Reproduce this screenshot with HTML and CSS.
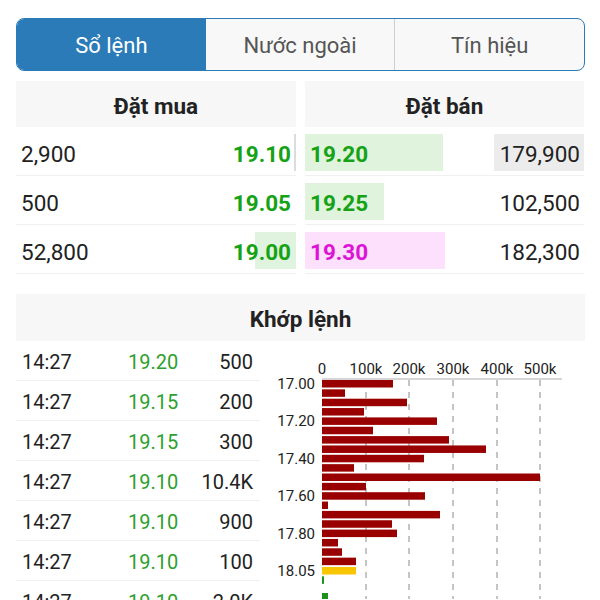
FILE: index.html
```html
<!DOCTYPE html>
<html lang="vi">
<head>
    <meta charset="UTF-8">
    <meta name="viewport" content="width=device-width, initial-scale=1.0">
    <title>Sổ lệnh</title>
    <link rel="stylesheet" href="styles.css">
</head>
<body>
    <div class="page">
        <div class="tabs">
            <div class="tab active">Sổ lệnh</div>
            <div class="tab">Nước ngoài</div>
            <div class="tab">Tín hiệu</div>
        </div>

        <div class="book">
            <div class="side">
                <div class="head">Đặt mua</div>
                <div class="row">
                    <span class="bar bar-bid bar-tiny" style="width:2px"></span>
                    <span class="vol">2,900</span>
                    <span class="px up">19.10</span>
                </div>
                <div class="row">
                    <span class="vol">500</span>
                    <span class="px up">19.05</span>
                </div>
                <div class="row">
                    <span class="bar bar-bid" style="width:41px"></span>
                    <span class="vol">52,800</span>
                    <span class="px up">19.00</span>
                </div>
            </div>
            <div class="side side-ask">
                <div class="head">Đặt bán</div>
                <div class="row">
                    <span class="bar bar-ask" style="width:138px"></span>
                    <span class="bar bar-vol" style="width:90px"></span>
                    <span class="px up">19.20</span>
                    <span class="vol">179,900</span>
                </div>
                <div class="row">
                    <span class="bar bar-ask" style="width:79px"></span>
                    <span class="px up">19.25</span>
                    <span class="vol">102,500</span>
                </div>
                <div class="row">
                    <span class="bar bar-ask ceil" style="width:140px"></span>
                    <span class="px ceil">19.30</span>
                    <span class="vol">182,300</span>
                </div>
            </div>
        </div>

        <div class="match">
            <div class="head">Khớp lệnh</div>
            <div class="match-body">
                <div class="trades">
                    <div class="trade"><span>14:27</span><span class="t-px">19.20</span><span class="t-vol">500</span></div>
                    <div class="trade"><span>14:27</span><span class="t-px">19.15</span><span class="t-vol">200</span></div>
                    <div class="trade"><span>14:27</span><span class="t-px">19.15</span><span class="t-vol">300</span></div>
                    <div class="trade"><span>14:27</span><span class="t-px">19.10</span><span class="t-vol">10.4K</span></div>
                    <div class="trade"><span>14:27</span><span class="t-px">19.10</span><span class="t-vol">900</span></div>
                    <div class="trade"><span>14:27</span><span class="t-px">19.10</span><span class="t-vol">100</span></div>
                    <div class="trade"><span>14:27</span><span class="t-px">19.10</span><span class="t-vol">2.0K</span></div>
                </div>

                <svg class="chart" width="325" height="258" viewBox="260 342 325 258">
                    <!-- truc ngang -->
                    <g class="x-label">
                        <text x="322" y="375">0</text>
                        <text x="366" y="375">100k</text>
                        <text x="409" y="375">200k</text>
                        <text x="453" y="375">300k</text>
                        <text x="497" y="375">400k</text>
                        <text x="540" y="375">500k</text>
                    </g>
                    <line class="axis" x1="322" y1="380" x2="562" y2="380"/>
                    <g class="grid">
                        <line x1="366" y1="381" x2="366" y2="600"/>
                        <line x1="409" y1="381" x2="409" y2="600"/>
                        <line x1="453" y1="381" x2="453" y2="600"/>
                        <line x1="497" y1="381" x2="497" y2="600"/>
                        <line x1="540" y1="381" x2="540" y2="600"/>
                    </g>

                    <!-- khoi luong theo gia -->
                    <g class="bars">
                        <rect x="322" y="381" width="71" height="7.5"/>
                        <rect x="322" y="390.35" width="23" height="7.5"/>
                        <rect x="322" y="399.7" width="85" height="7.5"/>
                        <rect x="322" y="409.05" width="42" height="7.5"/>
                        <rect x="322" y="418.4" width="115" height="7.5"/>
                        <rect x="322" y="427.75" width="51" height="7.5"/>
                        <rect x="322" y="437.1" width="127" height="7.5"/>
                        <rect x="322" y="446.45" width="164" height="7.5"/>
                        <rect x="322" y="455.8" width="102" height="7.5"/>
                        <rect x="322" y="465.15" width="32" height="7.5"/>
                        <rect x="322" y="474.5" width="218" height="7.5"/>
                        <rect x="322" y="483.85" width="44" height="7.5"/>
                        <rect x="322" y="493.2" width="103" height="7.5"/>
                        <rect x="322" y="502.55" width="6" height="7.5"/>
                        <rect x="322" y="511.9" width="118" height="7.5"/>
                        <rect x="322" y="521.25" width="70" height="7.5"/>
                        <rect x="322" y="530.6" width="75" height="7.5"/>
                        <rect x="322" y="539.95" width="16" height="7.5"/>
                        <rect x="322" y="549.3" width="20" height="7.5"/>
                        <rect x="322" y="558.65" width="34" height="7.5"/>
                    </g>
                    <rect class="bar-ref" x="322" y="568" width="34" height="7.5"/>
                    <rect class="bar-up" x="322" y="577.35" width="2" height="7.5"/>
                    <rect class="bar-up" x="322" y="594" width="6" height="7.5"/>

                    <g class="y-label">
                        <text x="315" y="390">17.00</text>
                        <text x="315" y="427.4">17.20</text>
                        <text x="315" y="464.8">17.40</text>
                        <text x="315" y="502.2">17.60</text>
                        <text x="315" y="539.6">17.80</text>
                        <text x="315" y="577">18.05</text>
                    </g>
                </svg>
            </div>
        </div>
    </div>
</body>
</html>
```

FILE: styles.css
```css
*{
    padding: 0;
    margin: 0;
    box-sizing: border-box;
}
body{
    background-color: #fff;
    font-family: Roboto, "Liberation Sans", sans-serif;
    color: #222;
}
.page{
    padding: 18px 15px 0 16px;
}

/* tab */
.tabs{
    display: flex;
    height: 53px;
    border: 1.5px solid #2b7bb9;
    border-radius: 8px;
    overflow: hidden;
    background-color: #f8f8f8;
}
.tab{
    flex: 1;
    display: flex;
    align-items: center;
    justify-content: center;
    padding-top: 2px;
    font-size: 22px;
    color: #555;
    border-left: 1px solid #cfcfcf;
}
.tab:first-child,
.tab.active + .tab{
    border-left: none;
}
.tab.active{
    background-color: #2b7bb9;
    color: #fff;
}

/* so lenh */
.book{
    display: grid;
    grid-template-columns: 280px 279px;
    column-gap: 9px;
    margin-top: 10px;
}
.head{
    height: 46px;
    background-color: #f7f7f7;
    display: flex;
    align-items: center;
    justify-content: center;
    padding-top: 3px;
    font-size: 22.5px;
    font-weight: bold;
    color: #222;
}
.row{
    position: relative;
    height: 49px;
    border-bottom: 1px solid #f0f0f0;
    display: flex;
    align-items: center;
    justify-content: space-between;
    padding: 5px 5px 0;
    font-size: 22.5px;
}
.side-ask .row{
    padding-right: 4px;
}
.row span{
    position: relative;
}
.row .bar{
    position: absolute;
    top: 7px;
    height: 37px;
}
.bar-bid{
    right: 0;
    background-color: #e0f3df;
}
.bar-bid.bar-tiny{
    background-color: #dcdcdc;
}
.bar-ask{
    left: 0;
    background-color: #dff3dd;
}
.bar-ask.ceil{
    background-color: #fde0fb;
}
.bar-vol{
    right: 0;
    background-color: #ececec;
}
.px{
    font-weight: bold;
}
.up{
    color: #15a215;
}
.ceil{
    color: #dc14d6;
}

/* khop lenh */
.match{
    margin-top: 20px;
}
.match .head{
    height: 47px;
}
.match-body{
    display: flex;
}
.trades{
    width: 244px;
    flex: none;
}
.trade{
    display: grid;
    grid-template-columns: 106px 1fr auto;
    align-items: center;
    height: 40px;
    border-bottom: 1px solid #f0f0f0;
    padding: 2px 7px 0 6px;
    font-size: 20px;
    color: #222;
}
.t-px{
    color: #2ea02e;
}
.t-vol{
    text-align: right;
}
.chart{
    display: block;
    flex: none;
    font-family: Roboto, "Liberation Sans", sans-serif;
}
.x-label text{
    font-size: 15px;
    fill: #222;
    text-anchor: middle;
}
.y-label text{
    font-size: 15px;
    fill: #222;
    text-anchor: end;
}
.axis{
    stroke: #c8c8c8;
    stroke-width: 1.5;
}
.grid line{
    stroke: #8a8a8a;
    stroke-width: 1;
    stroke-dasharray: 6 6;
}
.bars rect{
    fill: #990000;
}
.bar-ref{
    fill: #f7c600;
}
.bar-up{
    fill: #1c921c;
}
```
